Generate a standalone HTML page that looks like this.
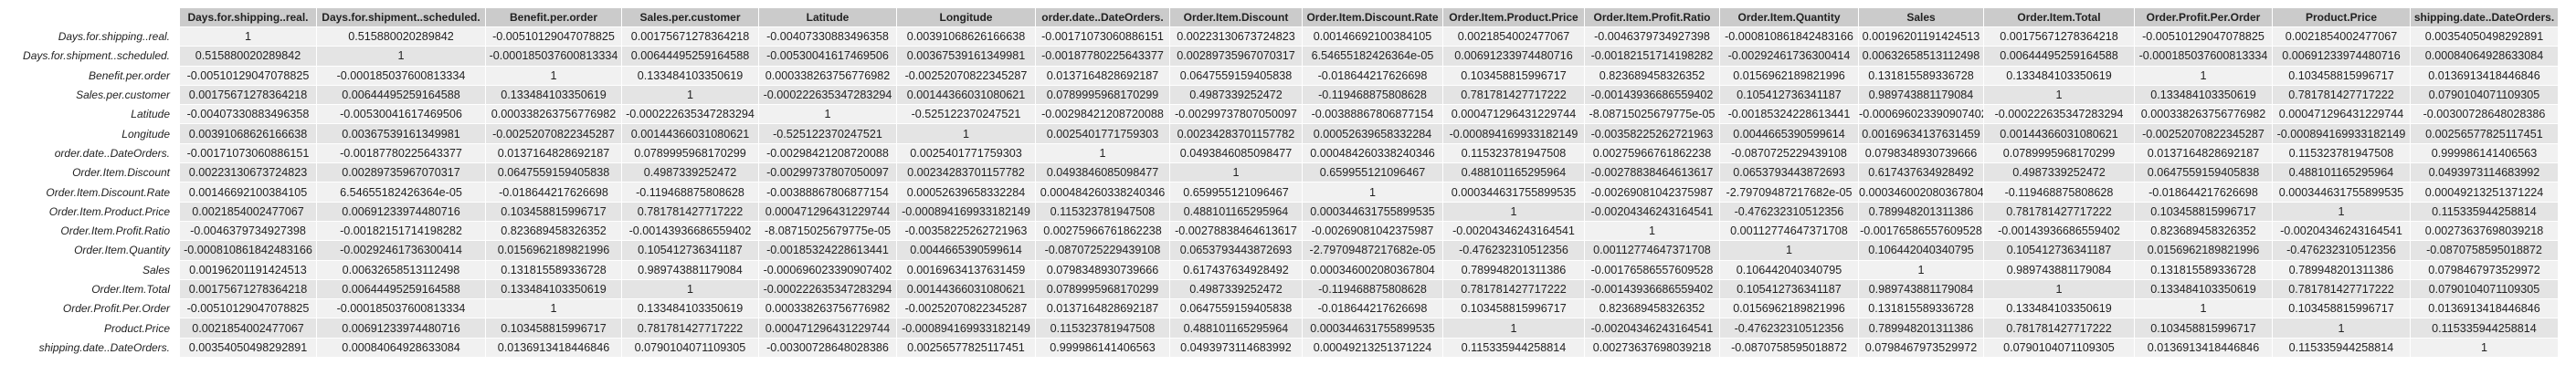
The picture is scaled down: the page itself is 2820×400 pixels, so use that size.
<!DOCTYPE html>
<html><head><meta charset="utf-8"><style>
html,body{margin:0;padding:0;background:#fff;width:2820px;height:400px;overflow:hidden}
table{position:absolute;left:0;top:8px;border-collapse:collapse;table-layout:fixed;width:2800px;font-family:"Liberation Sans",Arial,sans-serif;color:#222}
td,th{padding:0;border:1px solid #fff;white-space:nowrap;overflow:hidden;text-align:center;font-size:12.6px;line-height:14px}
thead th{background:#cbcbcb;font-weight:bold;font-size:12px;height:20px}
thead th.e{background:#fff}
tbody tr{height:21.3px}
tbody th{font-weight:normal;font-style:italic;text-align:right;padding-right:10px;font-size:12px;background:#fff}
tbody tr:nth-child(odd) td{background:#f1f1f1}
tbody tr:nth-child(even) td{background:#e4e4e4}
</style></head><body>
<table>
<colgroup><col style="width:196px"><col style="width:150px"><col style="width:185px"><col style="width:149px"><col style="width:150px"><col style="width:151px"><col style="width:152px"><col style="width:147px"><col style="width:145px"><col style="width:154px"><col style="width:155px"><col style="width:148px"><col style="width:152px"><col style="width:137px"><col style="width:165px"><col style="width:151px"><col style="width:151px"><col style="width:162px"></colgroup>
<thead><tr><th class="e"></th><th>Days.for.shipping..real.</th><th>Days.for.shipment..scheduled.</th><th>Benefit.per.order</th><th>Sales.per.customer</th><th>Latitude</th><th>Longitude</th><th>order.date..DateOrders.</th><th>Order.Item.Discount</th><th>Order.Item.Discount.Rate</th><th>Order.Item.Product.Price</th><th>Order.Item.Profit.Ratio</th><th>Order.Item.Quantity</th><th>Sales</th><th>Order.Item.Total</th><th>Order.Profit.Per.Order</th><th>Product.Price</th><th>shipping.date..DateOrders.</th></tr></thead>
<tbody>
<tr><th>Days.for.shipping..real.</th><td>1</td><td>0.515880020289842</td><td>-0.00510129047078825</td><td>0.00175671278364218</td><td>-0.00407330883496358</td><td>0.00391068626166638</td><td>-0.00171073060886151</td><td>0.00223130673724823</td><td>0.00146692100384105</td><td>0.0021854002477067</td><td>-0.0046379734927398</td><td>-0.000810861842483166</td><td>0.00196201191424513</td><td>0.00175671278364218</td><td>-0.00510129047078825</td><td>0.0021854002477067</td><td>0.00354050498292891</td></tr>
<tr><th>Days.for.shipment..scheduled.</th><td>0.515880020289842</td><td>1</td><td>-0.000185037600813334</td><td>0.00644495259164588</td><td>-0.00530041617469506</td><td>0.00367539161349981</td><td>-0.00187780225643377</td><td>0.00289735967070317</td><td>6.54655182426364e-05</td><td>0.00691233974480716</td><td>-0.00182151714198282</td><td>-0.00292461736300414</td><td>0.00632658513112498</td><td>0.00644495259164588</td><td>-0.000185037600813334</td><td>0.00691233974480716</td><td>0.00084064928633084</td></tr>
<tr><th>Benefit.per.order</th><td>-0.00510129047078825</td><td>-0.000185037600813334</td><td>1</td><td>0.133484103350619</td><td>0.000338263756776982</td><td>-0.00252070822345287</td><td>0.0137164828692187</td><td>0.0647559159405838</td><td>-0.018644217626698</td><td>0.103458815996717</td><td>0.823689458326352</td><td>0.0156962189821996</td><td>0.131815589336728</td><td>0.133484103350619</td><td>1</td><td>0.103458815996717</td><td>0.0136913418446846</td></tr>
<tr><th>Sales.per.customer</th><td>0.00175671278364218</td><td>0.00644495259164588</td><td>0.133484103350619</td><td>1</td><td>-0.000222635347283294</td><td>0.00144366031080621</td><td>0.0789995968170299</td><td>0.4987339252472</td><td>-0.119468875808628</td><td>0.781781427717222</td><td>-0.00143936686559402</td><td>0.105412736341187</td><td>0.989743881179084</td><td>1</td><td>0.133484103350619</td><td>0.781781427717222</td><td>0.0790104071109305</td></tr>
<tr><th>Latitude</th><td>-0.00407330883496358</td><td>-0.00530041617469506</td><td>0.000338263756776982</td><td>-0.000222635347283294</td><td>1</td><td>-0.525122370247521</td><td>-0.00298421208720088</td><td>-0.00299737807050097</td><td>-0.00388867806877154</td><td>0.000471296431229744</td><td>-8.08715025679775e-05</td><td>-0.00185324228613441</td><td>-0.000696023390907402</td><td>-0.000222635347283294</td><td>0.000338263756776982</td><td>0.000471296431229744</td><td>-0.00300728648028386</td></tr>
<tr><th>Longitude</th><td>0.00391068626166638</td><td>0.00367539161349981</td><td>-0.00252070822345287</td><td>0.00144366031080621</td><td>-0.525122370247521</td><td>1</td><td>0.0025401771759303</td><td>0.00234283701157782</td><td>0.00052639658332284</td><td>-0.000894169933182149</td><td>-0.00358225262721963</td><td>0.0044665390599614</td><td>0.00169634137631459</td><td>0.00144366031080621</td><td>-0.00252070822345287</td><td>-0.000894169933182149</td><td>0.00256577825117451</td></tr>
<tr><th>order.date..DateOrders.</th><td>-0.00171073060886151</td><td>-0.00187780225643377</td><td>0.0137164828692187</td><td>0.0789995968170299</td><td>-0.00298421208720088</td><td>0.0025401771759303</td><td>1</td><td>0.0493846085098477</td><td>0.000484260338240346</td><td>0.115323781947508</td><td>0.00275966761862238</td><td>-0.0870725229439108</td><td>0.0798348930739666</td><td>0.0789995968170299</td><td>0.0137164828692187</td><td>0.115323781947508</td><td>0.999986141406563</td></tr>
<tr><th>Order.Item.Discount</th><td>0.00223130673724823</td><td>0.00289735967070317</td><td>0.0647559159405838</td><td>0.4987339252472</td><td>-0.00299737807050097</td><td>0.00234283701157782</td><td>0.0493846085098477</td><td>1</td><td>0.659955121096467</td><td>0.488101165295964</td><td>-0.00278838464613617</td><td>0.0653793443872693</td><td>0.617437634928492</td><td>0.4987339252472</td><td>0.0647559159405838</td><td>0.488101165295964</td><td>0.0493973114683992</td></tr>
<tr><th>Order.Item.Discount.Rate</th><td>0.00146692100384105</td><td>6.54655182426364e-05</td><td>-0.018644217626698</td><td>-0.119468875808628</td><td>-0.00388867806877154</td><td>0.00052639658332284</td><td>0.000484260338240346</td><td>0.659955121096467</td><td>1</td><td>0.000344631755899535</td><td>-0.00269081042375987</td><td>-2.79709487217682e-05</td><td>0.000346002080367804</td><td>-0.119468875808628</td><td>-0.018644217626698</td><td>0.000344631755899535</td><td>0.00049213251371224</td></tr>
<tr><th>Order.Item.Product.Price</th><td>0.0021854002477067</td><td>0.00691233974480716</td><td>0.103458815996717</td><td>0.781781427717222</td><td>0.000471296431229744</td><td>-0.000894169933182149</td><td>0.115323781947508</td><td>0.488101165295964</td><td>0.000344631755899535</td><td>1</td><td>-0.00204346243164541</td><td>-0.476232310512356</td><td>0.789948201311386</td><td>0.781781427717222</td><td>0.103458815996717</td><td>1</td><td>0.115335944258814</td></tr>
<tr><th>Order.Item.Profit.Ratio</th><td>-0.0046379734927398</td><td>-0.00182151714198282</td><td>0.823689458326352</td><td>-0.00143936686559402</td><td>-8.08715025679775e-05</td><td>-0.00358225262721963</td><td>0.00275966761862238</td><td>-0.00278838464613617</td><td>-0.00269081042375987</td><td>-0.00204346243164541</td><td>1</td><td>0.00112774647371708</td><td>-0.00176586557609528</td><td>-0.00143936686559402</td><td>0.823689458326352</td><td>-0.00204346243164541</td><td>0.00273637698039218</td></tr>
<tr><th>Order.Item.Quantity</th><td>-0.000810861842483166</td><td>-0.00292461736300414</td><td>0.0156962189821996</td><td>0.105412736341187</td><td>-0.00185324228613441</td><td>0.0044665390599614</td><td>-0.0870725229439108</td><td>0.0653793443872693</td><td>-2.79709487217682e-05</td><td>-0.476232310512356</td><td>0.00112774647371708</td><td>1</td><td>0.106442040340795</td><td>0.105412736341187</td><td>0.0156962189821996</td><td>-0.476232310512356</td><td>-0.0870758595018872</td></tr>
<tr><th>Sales</th><td>0.00196201191424513</td><td>0.00632658513112498</td><td>0.131815589336728</td><td>0.989743881179084</td><td>-0.000696023390907402</td><td>0.00169634137631459</td><td>0.0798348930739666</td><td>0.617437634928492</td><td>0.000346002080367804</td><td>0.789948201311386</td><td>-0.00176586557609528</td><td>0.106442040340795</td><td>1</td><td>0.989743881179084</td><td>0.131815589336728</td><td>0.789948201311386</td><td>0.0798467973529972</td></tr>
<tr><th>Order.Item.Total</th><td>0.00175671278364218</td><td>0.00644495259164588</td><td>0.133484103350619</td><td>1</td><td>-0.000222635347283294</td><td>0.00144366031080621</td><td>0.0789995968170299</td><td>0.4987339252472</td><td>-0.119468875808628</td><td>0.781781427717222</td><td>-0.00143936686559402</td><td>0.105412736341187</td><td>0.989743881179084</td><td>1</td><td>0.133484103350619</td><td>0.781781427717222</td><td>0.0790104071109305</td></tr>
<tr><th>Order.Profit.Per.Order</th><td>-0.00510129047078825</td><td>-0.000185037600813334</td><td>1</td><td>0.133484103350619</td><td>0.000338263756776982</td><td>-0.00252070822345287</td><td>0.0137164828692187</td><td>0.0647559159405838</td><td>-0.018644217626698</td><td>0.103458815996717</td><td>0.823689458326352</td><td>0.0156962189821996</td><td>0.131815589336728</td><td>0.133484103350619</td><td>1</td><td>0.103458815996717</td><td>0.0136913418446846</td></tr>
<tr><th>Product.Price</th><td>0.0021854002477067</td><td>0.00691233974480716</td><td>0.103458815996717</td><td>0.781781427717222</td><td>0.000471296431229744</td><td>-0.000894169933182149</td><td>0.115323781947508</td><td>0.488101165295964</td><td>0.000344631755899535</td><td>1</td><td>-0.00204346243164541</td><td>-0.476232310512356</td><td>0.789948201311386</td><td>0.781781427717222</td><td>0.103458815996717</td><td>1</td><td>0.115335944258814</td></tr>
<tr><th>shipping.date..DateOrders.</th><td>0.00354050498292891</td><td>0.00084064928633084</td><td>0.0136913418446846</td><td>0.0790104071109305</td><td>-0.00300728648028386</td><td>0.00256577825117451</td><td>0.999986141406563</td><td>0.0493973114683992</td><td>0.00049213251371224</td><td>0.115335944258814</td><td>0.00273637698039218</td><td>-0.0870758595018872</td><td>0.0798467973529972</td><td>0.0790104071109305</td><td>0.0136913418446846</td><td>0.115335944258814</td><td>1</td></tr>
</tbody></table>
</body></html>
